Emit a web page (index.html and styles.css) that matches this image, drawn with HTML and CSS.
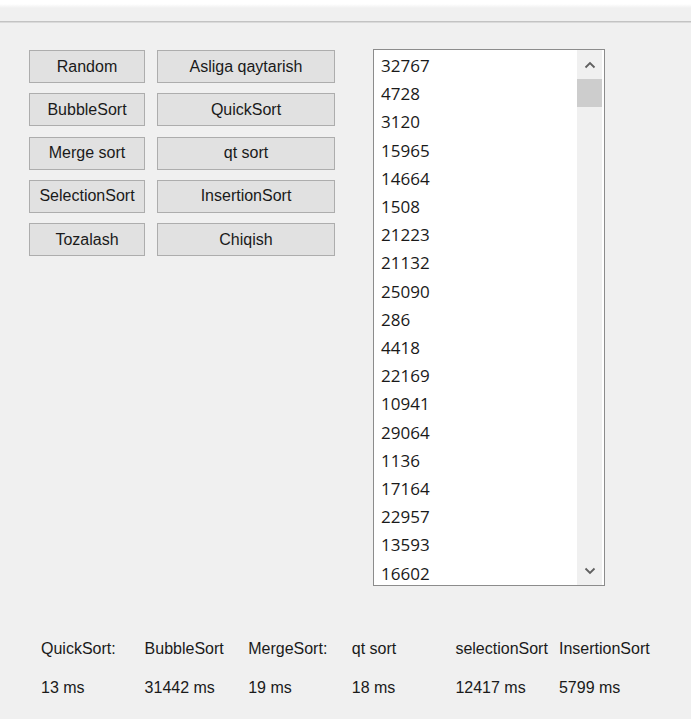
FILE: index.html
```html
<!DOCTYPE html>
<html>
<head>
<meta charset="utf-8">
<link rel="stylesheet" href="styles.css">
</head>
<body>
<div class="topbar"></div>
<div class="main">
  <div class="buttons">
    <button class="btn">Random</button>
    <button class="btn">Asliga qaytarish</button>
    <button class="btn">BubbleSort</button>
    <button class="btn">QuickSort</button>
    <button class="btn">Merge sort</button>
    <button class="btn">qt sort</button>
    <button class="btn">SelectionSort</button>
    <button class="btn">InsertionSort</button>
    <button class="btn">Tozalash</button>
    <button class="btn">Chiqish</button>
  </div>
  <div class="listbox">
    <ul class="items">
      <li>32767</li><li>4728</li><li>3120</li><li>15965</li><li>14664</li>
      <li>1508</li><li>21223</li><li>21132</li><li>25090</li><li>286</li>
      <li>4418</li><li>22169</li><li>10941</li><li>29064</li><li>1136</li>
      <li>17164</li><li>22957</li><li>13593</li><li>16602</li>
    </ul>
    <div class="scrollbar">
      <div class="arrow up"><svg width="12" height="8" viewBox="0 0 12 8"><path d="M1.5 6.5 L6 2 L10.5 6.5" fill="none" stroke="#606060" stroke-width="1.8"/></svg></div>
      <div class="thumb"></div>
      <div class="track"></div>
      <div class="arrow down"><svg width="12" height="8" viewBox="0 0 12 8"><path d="M1.5 1.5 L6 6 L10.5 1.5" fill="none" stroke="#606060" stroke-width="1.8"/></svg></div>
    </div>
  </div>
</div>
<div class="stats">
  <span>QuickSort:</span><span>BubbleSort</span><span>MergeSort:</span><span>qt sort</span><span>selectionSort</span><span>InsertionSort</span>
  <span>13 ms</span><span>31442 ms</span><span>19 ms</span><span>18 ms</span><span>12417 ms</span><span>5799 ms</span>
</div>
</body>
</html>
```

FILE: styles.css
```css
html, body {
  margin: 0;
  padding: 0;
  background: #f0f0f0;
  width: 691px;
  height: 719px;
  overflow: hidden;
}
.topbar {
  height: 21px;
  background: linear-gradient(#ffffff 0px, #ffffff 4px, #f0f0f0 8px, #f0f0f0 100%);
  border-bottom: 1px solid #c3c3c3;
  box-shadow: 0 1px 0 #dadada;
}
.main {
  display: flex;
  align-items: flex-start;
  gap: 38px;
  padding: 27px 0 0 29px;
}
.buttons {
  display: grid;
  grid-template-columns: 116px 178px;
  grid-auto-rows: 33px;
  column-gap: 12px;
  row-gap: 10.3px;
  margin-top: 1px;
}
.btn {
  margin: 0;
  padding: 0;
  background: #e1e1e1;
  border: 1px solid #adadad;
  font-family: "Liberation Sans", Arial, sans-serif;
  font-size: 16px;
  color: #1a1a1a;
}
.listbox {
  width: 228px;
  height: 535px;
  border: 1px solid #8c8c8c;
  background: #ffffff;
  display: flex;
  padding-right: 2px;
  box-sizing: content-box;
}
.items {
  list-style: none;
  margin: 0;
  padding: 2px 0 0 7px;
  flex: 1;
  font-family: "Open Sans", "Noto Sans", sans-serif;
  font-size: 17px;
  line-height: 28.2px;
  color: #1a1a1a;
  overflow: hidden;
}
.scrollbar {
  width: 25px;
  display: flex;
  flex-direction: column;
  background: #f0f0f0;
}
.arrow {
  height: 29px;
  display: flex;
  align-items: center;
  justify-content: center;
}
.thumb {
  height: 28px;
  background: #cdcdcd;
}
.track {
  flex: 1;
}
.stats {
  display: grid;
  grid-template-columns: repeat(6, 103.6px);
  grid-auto-rows: 20px;
  row-gap: 19px;
  padding: 53px 0 0 41px;
  font-family: "Liberation Sans", Arial, sans-serif;
  font-size: 16px;
  line-height: 20px;
  color: #1a1a1a;
  white-space: nowrap;
}
```
